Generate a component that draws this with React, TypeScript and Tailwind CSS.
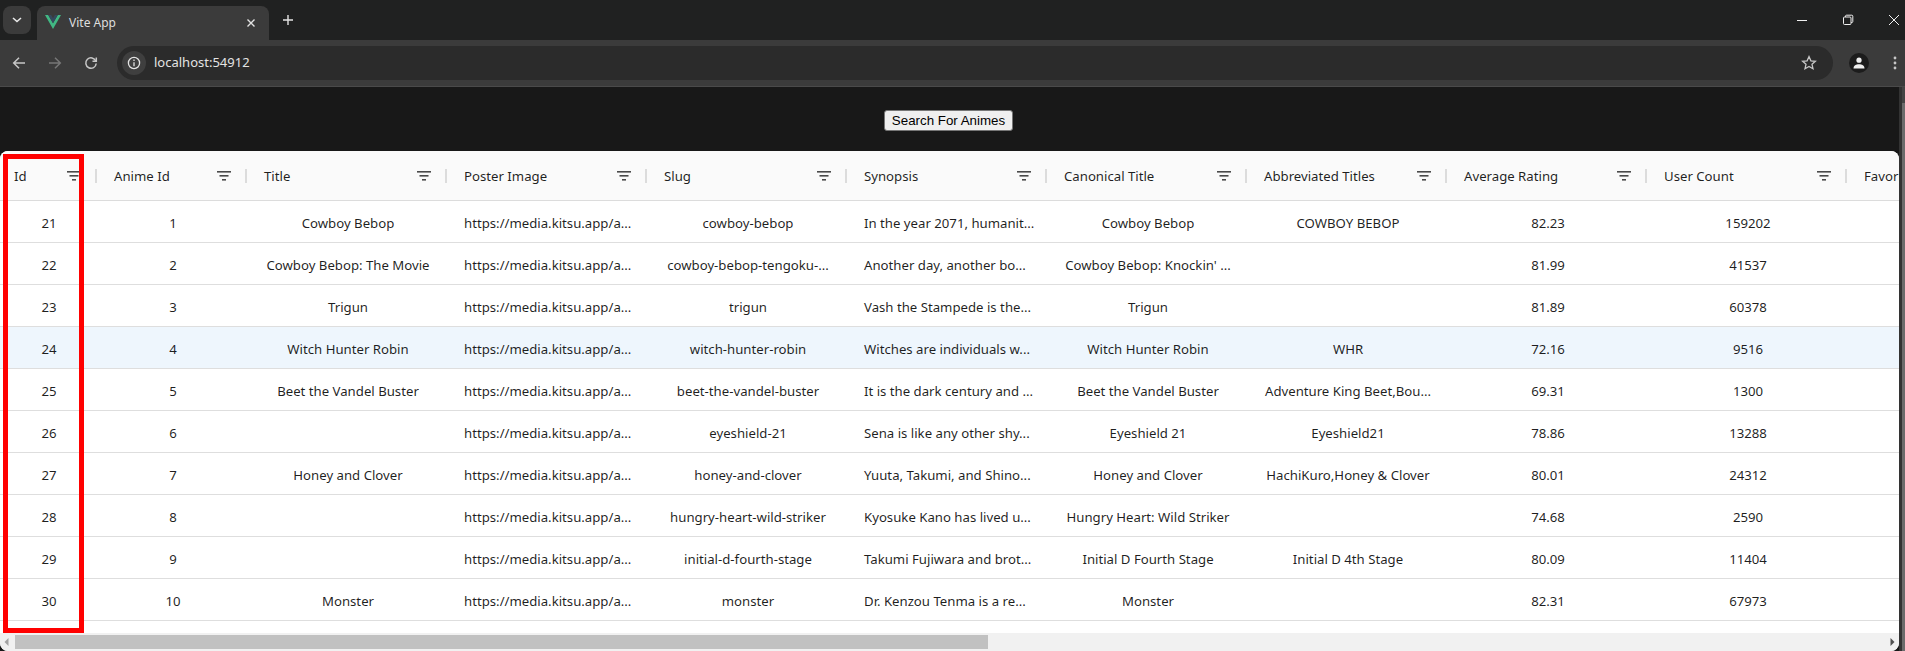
import React from "react";

const cols = [
  { name: "Id", w: "w-[98px]", pl: "pl-[14px]", center: true },
  { name: "Anime Id", w: "w-[150px]", pl: "pl-4", center: true },
  { name: "Title", w: "w-[200px]", pl: "pl-4", center: true },
  { name: "Poster Image", w: "w-[200px]", pl: "pl-4", center: false },
  { name: "Slug", w: "w-[200px]", pl: "pl-4", center: true },
  { name: "Synopsis", w: "w-[200px]", pl: "pl-4", center: false },
  { name: "Canonical Title", w: "w-[200px]", pl: "pl-4", center: true },
  { name: "Abbreviated Titles", w: "w-[200px]", pl: "pl-4", center: true },
  { name: "Average Rating", w: "w-[200px]", pl: "pl-4", center: true },
  { name: "User Count", w: "w-[200px]", pl: "pl-4", center: true },
  { name: "Favorites", w: "w-[200px]", pl: "pl-4", center: true },
];

const poster = "https://media.kitsu.app/a...";

const rows: string[][] = [
  ["21", "1", "Cowboy Bebop", poster, "cowboy-bebop", "In the year 2071, humanit...", "Cowboy Bebop", "COWBOY BEBOP", "82.23", "159202", ""],
  ["22", "2", "Cowboy Bebop: The Movie", poster, "cowboy-bebop-tengoku-...", "Another day, another bo...", "Cowboy Bebop: Knockin' ...", "", "81.99", "41537", ""],
  ["23", "3", "Trigun", poster, "trigun", "Vash the Stampede is the...", "Trigun", "", "81.89", "60378", ""],
  ["24", "4", "Witch Hunter Robin", poster, "witch-hunter-robin", "Witches are individuals w...", "Witch Hunter Robin", "WHR", "72.16", "9516", ""],
  ["25", "5", "Beet the Vandel Buster", poster, "beet-the-vandel-buster", "It is the dark century and ...", "Beet the Vandel Buster", "Adventure King Beet,Bou...", "69.31", "1300", ""],
  ["26", "6", "", poster, "eyeshield-21", "Sena is like any other shy...", "Eyeshield 21", "Eyeshield21", "78.86", "13288", ""],
  ["27", "7", "Honey and Clover", poster, "honey-and-clover", "Yuuta, Takumi, and Shino...", "Honey and Clover", "HachiKuro,Honey & Clover", "80.01", "24312", ""],
  ["28", "8", "", poster, "hungry-heart-wild-striker", "Kyosuke Kano has lived u...", "Hungry Heart: Wild Striker", "", "74.68", "2590", ""],
  ["29", "9", "", poster, "initial-d-fourth-stage", "Takumi Fujiwara and brot...", "Initial D Fourth Stage", "Initial D 4th Stage", "80.09", "11404", ""],
  ["30", "10", "Monster", poster, "monster", "Dr. Kenzou Tenma is a re...", "Monster", "", "82.31", "67973", ""],
];

function FilterIcon() {
  return (
    <svg width="14" height="10" viewBox="0 0 14 10" className="shrink-0 block" fill="#4a4a4a">
      <rect x="0" y="0" width="14" height="1.6" />
      <rect x="2.5" y="4" width="9" height="1.6" />
      <rect x="5" y="8" width="4" height="1.6" />
    </svg>
  );
}

function HeaderCell({ col, last }: { col: (typeof cols)[number]; last: boolean }) {
  return (
    <div className={`${col.w} ${col.pl} shrink-0 flex items-center h-full`}>
      <span className="whitespace-nowrap pt-[2px]">{col.name}</span>
      {!last && (
        <>
          <span className="ml-auto mr-[14px]">
            <FilterIcon />
          </span>
          <span className="w-[2px] h-[14px] bg-[#dcdcdc] mr-[1px]" />
        </>
      )}
    </div>
  );
}

function Chrome() {
  return (
    <div className="shrink-0 text-[#e3e3e3]">
      <div className="h-[40px] bg-[#202121] flex items-start">
        <div className="ml-[3px] mt-[6px] w-[28px] h-[28px] rounded-lg bg-[#3b3b3b] flex items-center justify-center">
          <svg width="10" height="6" viewBox="0 0 10 6" fill="none" stroke="#e8e8e8" strokeWidth="1.6">
            <path d="M1 1l4 3.5L9 1" />
          </svg>
        </div>
        <div className="ml-[6px] mt-[6px] w-[232px] h-[34px] rounded-t-lg bg-[#3b3b3b] flex items-center pl-[8px] pr-[10px]">
          <svg width="16" height="14" viewBox="0 0 16 14" className="-translate-y-[1px]">
            <path d="M0 0h3.2L8 8.2 12.8 0H16L8 14z" fill="#41b883" />
            <path d="M3.2 0h2.9L8 3.3 9.9 0h2.9L8 8.2z" fill="#35495e" />
          </svg>
          <span className="ml-[8px] text-[12px] text-[#dedede]">Vite App</span>
          <svg width="10" height="10" viewBox="0 0 10 10" className="ml-auto mr-[3px]" stroke="#e3e3e3" strokeWidth="1.4">
            <path d="M1.5 1.5l7 7M8.5 1.5l-7 7" />
          </svg>
        </div>
        <svg width="12" height="12" viewBox="0 0 12 12" className="ml-[13px] mt-[14px]" stroke="#e3e3e3" strokeWidth="1.4">
          <path d="M6 1v10M1 6h10" />
        </svg>
        <div className="ml-auto flex items-center h-[40px] text-[#f0f0f0]">
          <svg width="12" height="12" viewBox="0 0 12 12" className="mr-[34px]" stroke="currentColor" strokeWidth="1">
            <path d="M1 6.500h10" />
          </svg>
          <svg width="12" height="12" viewBox="0 0 12 12" className="mr-[34px]" fill="none" stroke="currentColor" strokeWidth="1">
            <rect x="1.500" y="3" width="7.500" height="7.500" rx="1" />
            <path d="M3.500 3V2.200A1 1 0 0 1 4.500 1.200h5.300a1 1 0 0 1 1 1v5.300a1 1 0 0 1-1 1H9" />
          </svg>
          <svg width="12" height="12" viewBox="0 0 12 12" className="mr-[5px]" stroke="currentColor" strokeWidth="1">
            <path d="M1 1l10 10M11 1L1 11" />
          </svg>
        </div>
      </div>
      <div className="h-[47px] bg-[#3b3b3b] flex items-center border-b border-[#4a4a4a]">
        <svg width="14" height="14" viewBox="0 0 14 14" className="ml-[12px]" fill="none" stroke="#c7c7c7" strokeWidth="1.5">
          <path d="M13 7H2M7 1.700L1.700 7 7 12.300" />
        </svg>
        <svg width="14" height="14" viewBox="0 0 14 14" className="ml-[22px]" fill="none" stroke="#777" strokeWidth="1.5">
          <path d="M1 7h11M7 1.700L12.300 7 7 12.300" />
        </svg>
        <svg width="14" height="14" viewBox="0 0 14 14" className="ml-[22px]" fill="none" stroke="#c7c7c7" strokeWidth="1.5">
          <path d="M11.800 5A5.200 5.200 0 1 0 12.200 7.500" />
          <path d="M12.300 1.500V5.300H8.500" />
        </svg>
        <div className="ml-[19px] w-[1716px] h-[34px] rounded-full bg-[#2b2b2b] flex items-center">
          <div className="ml-[5px] w-[24px] h-[24px] rounded-full bg-[#3f3f3f] flex items-center justify-center">
            <svg width="14" height="14" viewBox="0 0 14 14" fill="none" stroke="#e3e3e3" strokeWidth="1.3">
              <circle cx="7" cy="7" r="5.600" />
              <path d="M7 6.200v4M7 3.600v1.400" />
            </svg>
          </div>
          <span className="ml-[8px] text-[13px] text-[#e3e3e3]">localhost:54912</span>
          <svg width="16" height="16" viewBox="0 0 16 16" className="ml-auto mr-[16px]" fill="none" stroke="#c7c7c7" strokeWidth="1.3">
            <path d="M8 1.600l1.900 4.200 4.500.5-3.400 3 1 4.500L8 11.500l-4 2.300 1-4.500-3.400-3 4.500-.5z" />
          </svg>
        </div>
        <div className="ml-[16px] w-[20px] h-[20px] rounded-full bg-[#1c1c1c] flex items-center justify-center">
          <svg width="12" height="12" viewBox="0 0 12 12" fill="#f0f0f0">
            <circle cx="6" cy="3.200" r="2.600" />
            <path d="M0.500 11.500c0-3 2.600-4.200 5.500-4.200s5.500 1.200 5.500 4.200z" />
          </svg>
        </div>
        <svg width="4" height="14" viewBox="0 0 4 14" className="ml-[24px]" fill="#c7c7c7">
          <circle cx="2" cy="2" r="1.400" />
          <circle cx="2" cy="7" r="1.400" />
          <circle cx="2" cy="12" r="1.400" />
        </svg>
      </div>
    </div>
  );
}

export default function App() {
  return (
    <div
      className="h-[651px] w-[1905px] overflow-hidden flex flex-col bg-[#181818]"
      style={{ fontFamily: '"Noto Sans", "Open Sans", sans-serif' }}
    >
      <Chrome />
      <div className="flex-1 min-h-0 flex">
        <div className="w-[1899px] flex flex-col min-w-0">
          <div className="h-[64px] shrink-0 flex items-start justify-center pt-[23px]">
            <button
              className="w-[129px] h-[21px] -translate-x-[1px] bg-[#efefef] border border-[#767676] rounded-[3px] text-black text-[13.33px] leading-none"
              style={{ fontFamily: '"Liberation Sans", sans-serif' }}
            >
              Search For Animes
            </button>
          </div>
          <div className="flex-1 min-h-0 relative bg-white rounded-lg overflow-hidden flex flex-col text-[13.2px] text-[#000000e0]">
            <div className="h-[50px] shrink-0 bg-[#fafafa] border-b border-[#dcdcdc] flex">
              {cols.map((c, i) => (
                <HeaderCell key={c.name} col={c} last={i === cols.length - 1} />
              ))}
            </div>
            <div className="flex-1 min-h-0">
              {rows.map((r, ri) => (
                <div
                  key={r[0]}
                  className={`h-[42px] flex items-center border-b border-[#dedede] ${ri === 3 ? "bg-[#eef6fd]" : ""}`}
                >
                  {r.map((v, ci) => (
                    <div
                      key={ci}
                      className={`${cols[ci].w} shrink-0 px-2 pt-[4px] whitespace-nowrap ${cols[ci].center ? "text-center" : "text-left pl-4"}`}
                    >
                      {v}
                    </div>
                  ))}
                </div>
              ))}
            </div>
            <div className="h-[18px] shrink-0 bg-[#f1f1f1] flex items-center">
              <svg width="15" height="18" viewBox="0 0 15 18" fill="#a3a3a3" className="shrink-0">
                <path d="M4.500 9l4-4v8z" />
              </svg>
              <div className="w-[973px] h-[14px] bg-[#c1c1c1]" />
              <svg width="15" height="18" viewBox="0 0 15 18" fill="#505050" className="shrink-0 ml-auto">
                <path d="M10.500 9l-4-4v8z" />
              </svg>
            </div>
            <div className="absolute left-[3px] top-[3px] w-[81px] h-[479px] border-[5px] border-[#ff0000] pointer-events-none" />
          </div>
        </div>
        <div className="w-[6px] bg-[#333333] flex flex-col items-end">
          <div className="h-[16px] w-[3px] bg-[#444444]" />
          <div className="flex-1 w-[3px] bg-[#6b6b6b]" />
        </div>
      </div>
    </div>
  );
}
